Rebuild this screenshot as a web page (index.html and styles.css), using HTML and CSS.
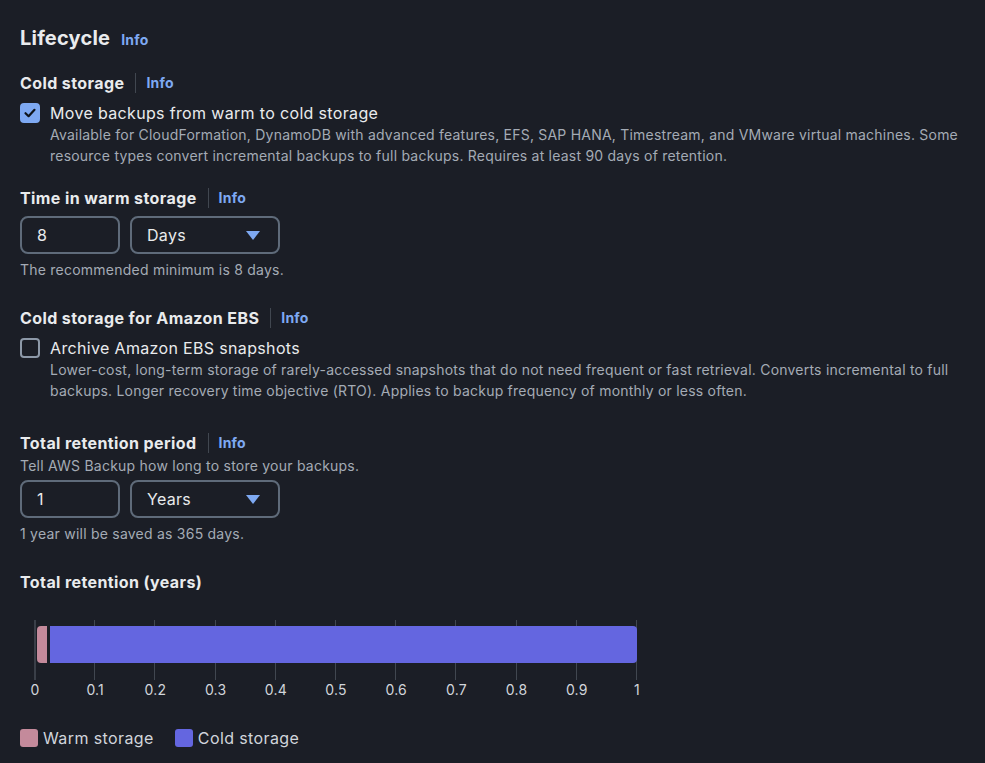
FILE: index.html
```html
<!DOCTYPE html>
<html>
<head>
<meta charset="utf-8">
<link rel="stylesheet" href="styles.css">
</head>
<body>
<div class="panel">
  <h2 class="title">Lifecycle <a class="info">Info</a></h2>

  <div class="field first">
    <div class="label">Cold storage <span class="sep"></span><a class="info">Info</a></div>
    <div class="check">
      <span class="box checked"><svg viewBox="0 0 20 20" width="20" height="20"><path d="M5.5 10.2 L8.6 13.2 L14.5 6.8" fill="none" stroke="#0f141a" stroke-width="2.2" stroke-linecap="round" stroke-linejoin="round"/></svg></span>
      <div class="check-text">
        <div class="check-label">Move backups from warm to cold storage</div>
        <div class="desc">Available for CloudFormation, DynamoDB with advanced features, EFS, SAP HANA, Timestream, and VMware virtual machines. Some resource types convert incremental backups to full backups. Requires at least 90 days of retention.</div>
      </div>
    </div>
  </div>

  <div class="field second">
    <div class="label">Time in warm storage <span class="sep"></span><a class="info">Info</a></div>
    <div class="inputs">
      <div class="input">8</div>
      <div class="select">Days <span class="caret"></span></div>
    </div>
    <div class="hint">The recommended minimum is 8 days.</div>
  </div>

  <div class="field third">
    <div class="label">Cold storage for Amazon EBS <span class="sep"></span><a class="info">Info</a></div>
    <div class="check">
      <span class="box"></span>
      <div class="check-text">
        <div class="check-label">Archive Amazon EBS snapshots</div>
        <div class="desc">Lower-cost, long-term storage of rarely-accessed snapshots that do not need frequent or fast retrieval. Converts incremental to full backups. Longer recovery time objective (RTO). Applies to backup frequency of monthly or less often.</div>
      </div>
    </div>
  </div>

  <div class="field fourth">
    <div class="label">Total retention period <span class="sep"></span><a class="info">Info</a></div>
    <div class="hint sub">Tell AWS Backup how long to store your backups.</div>
    <div class="inputs">
      <div class="input">1</div>
      <div class="select">Years <span class="caret"></span></div>
    </div>
    <div class="hint">1 year will be saved as 365 days.</div>
  </div>

  <div class="chart-block">
    <div class="label">Total retention (years)</div>
    <div class="chart">
      <div class="plot">
        <span class="tick zero" style="left:0%"></span>
        <span class="tick" style="left:10%"></span>
        <span class="tick" style="left:20%"></span>
        <span class="tick" style="left:30%"></span>
        <span class="tick" style="left:40%"></span>
        <span class="tick" style="left:50%"></span>
        <span class="tick" style="left:60%"></span>
        <span class="tick" style="left:70%"></span>
        <span class="tick" style="left:80%"></span>
        <span class="tick" style="left:90%"></span>
        <span class="tick" style="left:100%"></span>
        <div class="bars">
          <span class="bar warm" style="width:1.7%"></span>
          <span class="bar cold"></span>
        </div>
      </div>
      <div class="axis">
        <span style="left:0%">0</span>
        <span style="left:10%">0.1</span>
        <span style="left:20%">0.2</span>
        <span style="left:30%">0.3</span>
        <span style="left:40%">0.4</span>
        <span style="left:50%">0.5</span>
        <span style="left:60%">0.6</span>
        <span style="left:70%">0.7</span>
        <span style="left:80%">0.8</span>
        <span style="left:90%">0.9</span>
        <span style="left:100%">1</span>
      </div>
    </div>
    <div class="legend">
      <span class="leg"><span class="sw warm"></span>Warm storage</span>
      <span class="leg"><span class="sw cold"></span>Cold storage</span>
    </div>
  </div>
</div>
</body>
</html>
```

FILE: styles.css
```css
html, body {
  margin: 0;
  padding: 0;
  background: #1b1e26;
}
body {
  font-family: "Inter", "Open Sans", sans-serif;
  color: #d1d5db;
  width: 985px;
  height: 763px;
  overflow: hidden;
}
.panel {
  padding: 23px 20px 0 20px;
}
.title {
  margin: 0;
  font-size: 20px;
  font-weight: 700;
  color: #e9ebed;
  line-height: 30px;
  letter-spacing: 0.2px;
  display: flex;
  align-items: baseline;
  gap: 11px;
}
.info {
  color: #7ea9f2;
  font-size: 14px;
  font-weight: 700;
  letter-spacing: 0.2px;
}
.first { margin-top: 15px; }
.second { margin-top: 19px; }
.third { margin-top: 26px; }
.fourth { margin-top: 29px; }
.label {
  display: flex;
  align-items: center;
  font-size: 16px;
  font-weight: 700;
  color: #e9ebed;
  line-height: 26px;
  letter-spacing: 0.4px;
}
.sep {
  display: inline-block;
  width: 1px;
  height: 20px;
  background: #414750;
  margin: 0 10px 0 11px;
}
.check {
  display: flex;
  gap: 10px;
  margin-top: 7px;
}
.box {
  box-sizing: border-box;
  width: 20px;
  height: 20px;
  border: 2px solid #8d99a8;
  border-radius: 4px;
  flex: none;
  position: relative;
}
.box.checked {
  background: #7ea9f2;
  border-color: #7ea9f2;
}
.box svg {
  position: absolute;
  left: -2px;
  top: -2px;
}
.check-label {
  font-size: 16px;
  line-height: 20px;
  color: #e9ebed;
  letter-spacing: 0.34px;
}
.desc {
  font-size: 14px;
  line-height: 21px;
  color: #a4abb5;
  margin-top: 1px;
  letter-spacing: 0.22px;
}
.inputs {
  display: flex;
  gap: 10px;
  margin-top: 5px;
}
.input, .select {
  box-sizing: border-box;
  height: 38px;
  border: 2px solid #5f6b7a;
  border-radius: 8px;
  font-size: 16px;
  color: #e9ebed;
  display: flex;
  align-items: center;
  padding: 0 15px;
  letter-spacing: 0.3px;
}
.input {
  width: 100px;
}
.select {
  width: 150px;
  justify-content: space-between;
}
.caret {
  width: 0;
  height: 0;
  border-left: 7px solid transparent;
  border-right: 7px solid transparent;
  border-top: 9px solid #7ea9f2;
  margin-right: 3px;
}
.hint {
  font-size: 14px;
  color: #a4abb5;
  line-height: 18px;
  margin-top: 7px;
  letter-spacing: 0.23px;
}
.hint.sub {
  margin-top: 1px;
  margin-bottom: 1px;
}
.chart-block {
  margin-top: 26px;
}
.chart {
  margin-top: 25px;
  margin-left: 15px;
  width: 602px;
}
.plot {
  position: relative;
  height: 60px;
}
.tick {
  position: absolute;
  top: 0;
  bottom: 0;
  width: 1px;
  margin-left: -1px;
  background: #414750;
}
.tick.zero {
  width: 2px;
  background: #3a3f48;
}
.bars {
  position: absolute;
  left: 2px;
  right: 0;
  top: 6px;
  height: 37px;
  display: flex;
  gap: 3px;
}
.bar {
  display: block;
  height: 100%;
}
.bar.warm {
  background: #c48a9b;
  border-radius: 4px 0 0 4px;
  flex: none;
}
.bar.cold {
  flex: 1;
  background: #6466e0;
  border-radius: 0 4px 4px 0;
}
.axis {
  position: relative;
  height: 20px;
  font-size: 14px;
  color: #d1d5db;
  letter-spacing: 0.2px;
}
.axis span {
  position: absolute;
  transform: translateX(-50%);
  top: 0;
  line-height: 20px;
}
.legend {
  margin-top: 28px;
  display: flex;
  gap: 21px;
  font-size: 16px;
  line-height: 20px;
  color: #d1d5db;
  letter-spacing: 0.4px;
}
.leg {
  display: flex;
  align-items: center;
  gap: 5px;
}
.sw {
  width: 18px;
  height: 18px;
  border-radius: 3px;
  display: inline-block;
}
.sw.warm { background: #c48a9b; }
.sw.cold { background: #6466e0; }
```
